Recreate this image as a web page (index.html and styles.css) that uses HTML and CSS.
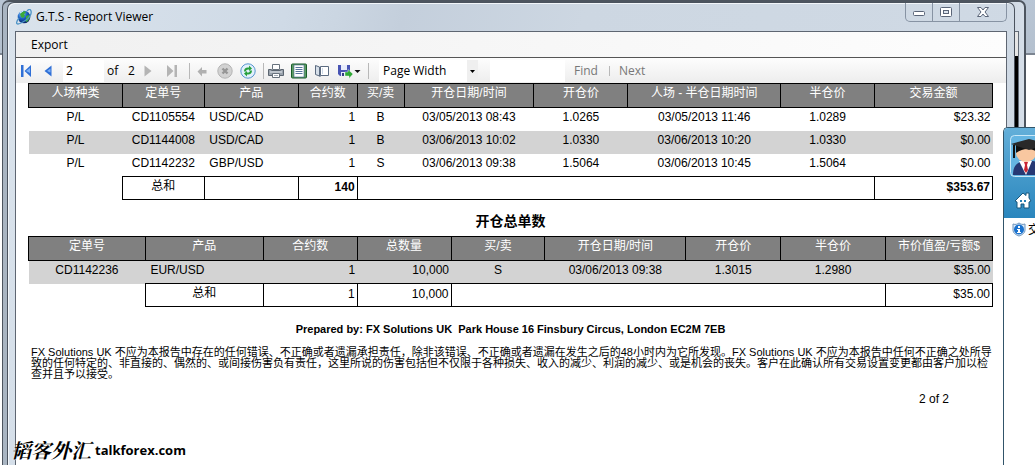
FILE: index.html
```html
<!DOCTYPE html>
<html lang="zh-CN">
<head>
<meta charset="utf-8">
<title>G.T.S - Report Viewer</title>
<link rel="stylesheet" href="styles.css">
</head>
<body>
<div class="back-window"><div class="back-client"></div></div>
<main class="window">
  <header class="titlebar">
    <svg class="app-icon" viewBox="0 0 16 16" width="16" height="16">
      <defs><radialGradient id="globe" cx="35%" cy="25%" r="75%"><stop offset="0" stop-color="#8fd0ff"/><stop offset=".5" stop-color="#1c62c4"/><stop offset="1" stop-color="#0a2467"/></radialGradient></defs>
      <circle cx="8" cy="8" r="6.3" fill="url(#globe)"/>
      <path d="M6 3l3-1 1 2-2 1 1 2-2 2-2-1-1-3zM10 7l3-1 1 3-3 4-2-1 1-2z" fill="#3daa3a"/>
      <path d="M3 9c-3 4-3 6-1 6s5-2 8-4 6-6 5-9-3-1-4 0" fill="none" stroke="#4d94c6" stroke-width="1.3"/>
      <path d="M4 4l3-2" stroke="#d8f1ff"/>
    </svg>
    <h1 class="title">G.T.S - Report Viewer</h1>
    <div class="controls">
      <button class="control" aria-label="Minimize"><svg width="14" height="14" viewBox="0 0 14 14"><rect x="1.5" y="6.500" width="11" height="4" rx="1" fill="#fff" stroke="#5a6578"/></svg></button>
      <button class="control" aria-label="Maximize"><svg width="14" height="14" viewBox="0 0 14 14"><rect x="1.5" y="2.500" width="11" height="9" rx="1" fill="#fff" stroke="#5a6578"/><rect x="4.500" y="5.500" width="5" height="3" fill="#dce4ee" stroke="#5a6578"/></svg></button>
      <button class="control control-close" aria-label="Close"><svg width="14" height="14" viewBox="0 0 14 14"><path d="M1.500 2.500h3.500l2 2.500 2-2.500h3.500l-3.500 4.500 3.500 4.500h-3.500l-2-2.500-2 2.500h-3.500l3.500-4.500z" fill="#fff" stroke="#5a6578"/></svg></button>
    </div>
  </header>
  <div class="client">
    <nav class="menu"><button class="menu-item">Export</button></nav>
    <div class="toolbar">
      <button class="tool" aria-label="First page"><svg width="12" height="14" viewBox="0 0 12 14"><path d="M1 1h2.500v12H1zM11 1v12L4.500 7z" fill="#2f6fd6"/><path d="M10 4v5L6 7z" fill="#7db0f5"/></svg></button>
      <button class="tool tool-prev" aria-label="Previous page"><svg width="8" height="14" viewBox="0 0 8 14"><path d="M7.500 1.500v11L.5 7z" fill="#2f6fd6"/><path d="M6.500 4.500v4L3 7z" fill="#7db0f5"/></svg></button>
      <input class="page-input" aria-label="Current page" value="2">
      <span class="of">of</span><span class="total">2</span>
      <button class="tool tool-next" aria-label="Next page"><svg width="8" height="14" viewBox="0 0 8 14"><path d="M.5 1.500v11L7.500 7z" fill="#b4b4b4"/></svg></button>
      <button class="tool tool-last" aria-label="Last page"><svg width="12" height="14" viewBox="0 0 12 14"><path d="M8.500 1H11v12H8.500zM1 1v12L7.500 7z" fill="#b4b4b4"/></svg></button>
      <i class="sep sep-wide"></i>
      <button class="tool" aria-label="Back"><svg width="10" height="16" viewBox="0 0 10 16"><path d="M.5 8.500L5 4v3h4.500v3.500H5v3z" fill="#b0b0b0"/></svg></button>
      <button class="tool tool-stop" aria-label="Stop"><svg width="16" height="16" viewBox="0 0 16 16"><circle cx="8" cy="8" r="7.200" fill="#d2d2d2" stroke="#b4b4b4"/><path d="M5.500 5.500l5 5m0-5l-5 5" stroke="#969696" stroke-width="2.400"/></svg></button>
      <button class="tool tool-refresh" aria-label="Refresh"><svg width="16" height="16" viewBox="0 0 16 16"><circle cx="8" cy="8" r="7.200" fill="#e2f0fc" stroke="#5796cf"/><path d="M4 8.500c0-3 2-4.500 5-4V2.500l3 3-3 2.500V6.500c-2-.3-3 .5-3 2zM12 7.500c0 3-2 4.500-5 4v2l-3-3L7 8v1.500c2 .3 3-.5 3-2z" fill="#27a03c"/></svg></button>
      <i class="sep"></i>
      <button class="tool" aria-label="Print"><svg width="16" height="16" viewBox="0 0 16 16"><path d="M4.500 1.500h7v5h-7z" fill="#fff" stroke="#68727d"/><path d="M.5 6.500h3v1h9v-1h3v6H.5z" fill="#9aa3ad" stroke="#5b6570"/><path d="M2 9h12" stroke="#e4e9ee"/><path d="M4.500 10.500h7v4h-7z" fill="#fff" stroke="#68727d"/><path d="M6 12.500h4" stroke="#a4adb8"/></svg></button>
      <button class="tool" aria-label="Print layout" aria-pressed="true"><svg width="16" height="16" viewBox="0 0 16 16"><rect x=".5" y="1" width="15" height="14" rx="1" fill="#5c9c62" stroke="#195d2b"/><path d="M3 2h10v12H3z" fill="#fff" stroke="#4a6a90" stroke-width=".6"/><path d="M4.500 4.500h7m-7 2h7m-7 2h7m-7 2h7" stroke="#56749c"/></svg></button>
      <button class="tool" aria-label="Page setup"><svg width="16" height="16" viewBox="0 0 16 16"><path d="M1.500 2.500l4 1.500v9l-4-1.500z" fill="#d6dfe9" stroke="#5b6b80"/><path d="M6.500 3.500h8v9h-8z" fill="#fff" stroke="#5b6b80"/><path d="M5.500 13.500l2-1" stroke="#5b6b80"/><path d="M8.500 5v6" stroke="#cbd7e5"/></svg></button>
      <button class="tool tool-export" aria-label="Export report"><svg width="24" height="16" viewBox="0 0 24 16"><path d="M1 2h12v11H3l-2-2z" fill="#4854b4"/><path d="M4 2h6v5H4zM4 9h6v4H4z" fill="#e7ecfb"/><path d="M5 10h2v3H5z" fill="#333c82"/><path d="M8 9h3V6.500l5 4.500-4 4.500V13H8z" fill="#2fa836" stroke="#fff" stroke-width=".4"/><path d="M17.500 7h6l-3 3z" fill="#111"/></svg></button>
      <i class="sep"></i>
      <span class="zoom">
        <select class="zoom-select" aria-label="Zoom"><option>Page Width</option><option>Whole Page</option><option>100%</option></select>
        <svg class="zoom-arrow" width="11" height="22" viewBox="0 0 11 22"><path d="M0 0h11v22H0z" fill="#efefef"/><path d="M3 10h5l-2.500 3z" fill="#000"/></svg>
      </span>
      <input class="find-input" aria-label="Find text">
      <button class="tool find">Find</button>
      <i class="sep sep-short"></i>
      <button class="tool next">Next</button>
    </div>
    <section class="report">
      <table class="grid">
        <colgroup><col style="width:9.740%"><col style="width:8.497%"><col style="width:9.741%"><col style="width:6.114%"><col style="width:4.871%"><col style="width:13.471%"><col style="width:9.741%"><col style="width:15.855%"><col style="width:9.741%"><col style="width:12.229%"></colgroup>
        <thead><tr><th>人场种类</th><th>定单号</th><th>产品</th><th>合约数</th><th>买/卖</th><th>开仓日期/时间</th><th>开仓价</th><th>人场 - 半仓日期时间</th><th>半仓价</th><th>交易金额</th></tr></thead>
        <tbody>
          <tr><td>P/L</td><td>CD1105554</td><td class="left">USD/CAD</td><td class="num">1</td><td>B</td><td>03/05/2013 08:43</td><td>1.0265</td><td>03/05/2013 11:46</td><td>1.0289</td><td class="num">$23.32</td></tr>
          <tr class="alt"><td>P/L</td><td>CD1144008</td><td class="left">USD/CAD</td><td class="num">1</td><td>B</td><td>03/06/2013 10:02</td><td>1.0330</td><td>03/06/2013 10:20</td><td>1.0330</td><td class="num">$0.00</td></tr>
          <tr><td>P/L</td><td>CD1142232</td><td class="left">GBP/USD</td><td class="num">1</td><td>S</td><td>03/06/2013 09:38</td><td>1.5064</td><td>03/06/2013 10:45</td><td>1.5064</td><td class="num">$0.00</td></tr>
        </tbody>
        <tfoot><tr><td class="blank"></td><td class="sum">总和</td><td></td><td class="num strong">140</td><td colspan="5"></td><td class="num strong">$353.67</td></tr></tfoot>
      </table>
      <h2 class="subtitle">开仓总单数</h2>
      <table class="grid">
        <colgroup><col style="width:12.124%"><col style="width:12.228%"><col style="width:9.741%"><col style="width:9.741%"><col style="width:9.741%"><col style="width:14.611%"><col style="width:9.845%"><col style="width:10.881%"><col style="width:11.088%"></colgroup>
        <thead><tr><th>定单号</th><th>产品</th><th>合约数</th><th>总数量</th><th>买/卖</th><th>开仓日期/时间</th><th>开仓价</th><th>半仓价</th><th>市价值盈/亏额$</th></tr></thead>
        <tbody><tr class="alt"><td>CD1142236</td><td class="left">EUR/USD</td><td class="num">1</td><td class="num">10,000</td><td>S</td><td>03/06/2013 09:38</td><td>1.3015</td><td>1.2980</td><td class="num">$35.00</td></tr></tbody>
        <tfoot><tr><td class="blank"></td><td class="sum">总和</td><td class="num">1</td><td class="num">10,000</td><td colspan="4"></td><td class="num">$35.00</td></tr></tfoot>
      </table>
      <p class="prepared">Prepared by: FX Solutions UK&nbsp; Park House 16 Finsbury Circus, London EC2M 7EB</p>
      <p class="disclaimer">FX Solutions UK 不应为本报告中存在的任何错误、不正确或者遗漏承担责任，除非该错误、不正确或者遗漏在发生之后的48小时内为它所发现。FX Solutions UK 不应为本报告中任何不正确之处所导致的任何特定的、非直接的、偶然的、或间接伤害负有责任，这里所说的伤害包括但不仅限于各种损失、收入的减少、利润的减少、或是机会的丧失。客户在此确认所有交易设置变更都由客户加以检查并且予以接受。</p>
      <p class="page-number">2 of 2</p>
    </section>
  </div>
</main>
<aside class="side-panel">
  <div class="side-head">
    <svg class="avatar" width="42" height="42" viewBox="0 0 42 42">
      <rect x=".5" y=".5" width="41" height="41" rx="4" fill="#65b5e2" stroke="#c9e8f8"/>
      <path d="M3 40c0-9 4-13 11-14h9c7 1 10 5 11 14z" fill="#263873"/>
      <path d="M9 26h13l-6 14z" fill="#fff"/>
      <path d="M14 27h4l-1 3 1 5-2 3-2-3 1-5z" fill="#c92532"/>
      <ellipse cx="16" cy="18" rx="10" ry="9" fill="#f8c7a0"/>
      <path d="M6 18V9l12-3 9 3v8c-6-4-14-4-21 1z" fill="#111"/>
      <path d="M1 9L19 4l19 5-19 6z" fill="#292929"/><path d="M4 10v13" stroke="#111" stroke-width="2"/>
    </svg>
    <svg class="home" width="18" height="18" viewBox="0 0 18 18"><path d="M1 10L9 2l3 2.500V2h3v5l2 3-2 1v6h-5v-4H7v4H3v-6z" fill="#fff" stroke="#17577d"/><path d="M6 9h2v2H6zm4 0h2v2h-2z" fill="#2780b5"/></svg>
  </div>
  <div class="side-row"><svg class="shield" width="14" height="15" viewBox="0 0 14 15"><path d="M1 2c3 1 4 0 6-1 2 1 3 2 6 1v6c0 3-3 5-6 6-3-1-6-3-6-6z" fill="#dceaf8" stroke="#6c94bd"/><circle cx="7" cy="7.500" r="5" fill="#1a72ce"/><path d="M6 4h2v2H6zM5 7h3v3h1v1H5v-1h1V8H5z" fill="#fff"/></svg><span>交</span></div>
</aside>
<div class="watermark"><span class="brand">韬客外汇</span><span>talkforex.com</span></div>
</body>
</html>
```
FILE: styles.css
```css
* { box-sizing: border-box; }
body {
  margin: 0;
  height: 100vh;
  position: relative;
  overflow: hidden;
  padding: 2px 20px 0 7px;
  background: linear-gradient(#b9c6d5 0, #b4c0ce 53px, #7c8591 53px, #7c8591 55px, #fff 55px);
  font-family: "Open Sans", "Noto Sans CJK SC", sans-serif;
  font-size: 12px;
  color: #000;
}
h1, h2, p { margin: 0; font-weight: normal; }
button { border: 0; padding: 0; background: none; font: inherit; color: inherit; }
input, select { border: 0; border-radius: 0; background: #fff; font: inherit; color: #000; outline: 0; }
svg { display: block; flex: none; }

.back-window {
  position: absolute;
  inset: 0 9px -2px 2px;
  padding: 29px 5px 0;
  border: 2px solid #4d555f;
  border-left-width: 1px;
  border-radius: 7px 7px 0 0;
  background: linear-gradient(90deg, #a9b5c2, #cbd4df 98%, #d6dfe9);
}
.back-client { height: 100%; background: linear-gradient(#e6e6e6 24px, #000 24px); border: 1px solid #626b77; }

.window {
  position: relative;
  height: 100%;
  display: flex;
  flex-direction: column;
  padding: 0 7px;
  border: 1px solid #4b535e;
  border-bottom: 0;
  border-radius: 7px 7px 0 0;
  background: linear-gradient(105deg, #dae3ec 0, #cfdae6 270px, #cbd6e2 320px, #c4cfdc 385px, #cdd7e2 560px, #d0dae5 100%);
  box-shadow: inset 1px 1px #f2f6fa;
}
.titlebar { display: flex; align-items: center; gap: 4px; height: 28px; padding-left: 1px; }
.app-icon { width: 16px; }
.title { flex: 1; font-size: 12px; line-height: 20px; }
.controls {
  display: flex;
  align-self: flex-start;
  height: 19px;
  border: 1px solid #8793a3;
  border-top: 0;
  border-radius: 0 0 5px 5px;
}
.control { display: grid; place-items: center; width: 27px; border-right: 1px solid #8793a3; }
.control-close { width: 46px; border-right: 0; }

.client {
  flex: 1;
  min-height: 0;
  overflow: hidden;
  border: 1px solid #5e6672;
  border-bottom: 0;
  background: #fff;
}
.menu { display: flex; height: 26px; padding: 0 15px; border-bottom: 1px solid #555; background: linear-gradient(90deg, #f0f0f0, #fdfdfd); }
.toolbar { display: flex; align-items: center; height: 25px; padding-left: 4px; background: linear-gradient(#fdfdfd, #ededed); }
.toolbar > * { flex: none; }
.tool { margin-right: 7px; }
.tool-prev { margin: 0 11px 0 5px; }
.page-input { width: 41px; height: 22px; padding: 0 3px; }
.of { width: 21px; margin-left: 3px; }
.total { width: 16px; }
.tool-next { margin-right: 14px; }
.tool-last { margin-right: 11px; }
.tool-stop { margin-left: 3px; }
.sep { width: 1px; height: 16px; margin-right: 4px; background: #b8b8b8; }
.sep-wide { margin-right: 7px; }
.tool-export { margin-right: 7px; }
.zoom { display: grid; width: 99px; height: 22px; margin: 0 12px 0 6px; }
.zoom-select, .zoom-arrow { grid-area: 1 / 1; }
.zoom-select { appearance: none; width: 100%; padding: 0 4px; }
.zoom-arrow { justify-self: end; pointer-events: none; }
.find-input { width: 75px; height: 22px; margin-right: 9px; }
.find, .next { color: #777; }
.find { margin-right: 11px; }
.sep-short { height: 10px; margin-right: 9px; }

.report { padding: 0 13px 0 12px; font-family: "Liberation Sans", "Noto Sans CJK SC", sans-serif; }
.grid { width: 100%; table-layout: fixed; border-collapse: collapse; line-height: 18px; }
.grid th, .grid td { height: 23px; padding: 0 2px; text-align: center; vertical-align: top; overflow: hidden; white-space: nowrap; }
.grid th { height: 24px; border: 1px solid #000; background: #808080; color: #fff; font-weight: normal; line-height: 18px; }
.grid .alt { background: #d3d3d3; }
.grid .left { text-align: left; padding-left: 5px; }
.grid .num { text-align: right; }
.grid .strong { font-weight: bold; }
.grid tfoot td { border: 1px solid #000; line-height: 20px; }
.grid tfoot .sum { line-height: 18px; }
.grid tfoot .blank { border-width: 0 1px 0 0; }
.subtitle { padding: 12px 0 6px; text-align: center; font-size: 14px; line-height: 18px; font-weight: bold; }
.prepared { padding: 14px 0 10px; text-align: center; font-size: 11px; font-weight: bold; line-height: 16px; }
.disclaimer { padding-left: 3px; font-size: 11px; line-height: 11px; }
.page-number { padding: 11px 44px 0 0; text-align: right; line-height: 16px; }

.side-panel {
  position: absolute;
  top: 127px;
  right: 0;
  bottom: 0;
  width: 32px;
  overflow: hidden;
  border: 1px solid #315469;
  border-width: 1px 0 0 1px;
  border-radius: 5px 0 0 0;
  background: #fff;
}
.side-head { height: 90px; padding: 7px 0 0 6px; background: linear-gradient(#63afd9, #2a86bd); }
.home { margin: 14px 0 0 4px; }
.side-row { display: flex; gap: 2px; padding: 3px 0 0 8px; line-height: 18px; }
.shield { margin-top: 1px; }

.watermark {
  position: absolute;
  left: 11px;
  bottom: 2px;
  display: flex;
  align-items: center;
  gap: 4px;
  font-size: 13px;
  font-weight: bold;
  line-height: 26px;
  text-shadow: 0 0 2px #fff, 1px 0 #fff;
}
.brand { font-family: "Noto Serif CJK SC", "Noto Sans CJK SC", serif; font-size: 20px; font-style: italic; }
```
